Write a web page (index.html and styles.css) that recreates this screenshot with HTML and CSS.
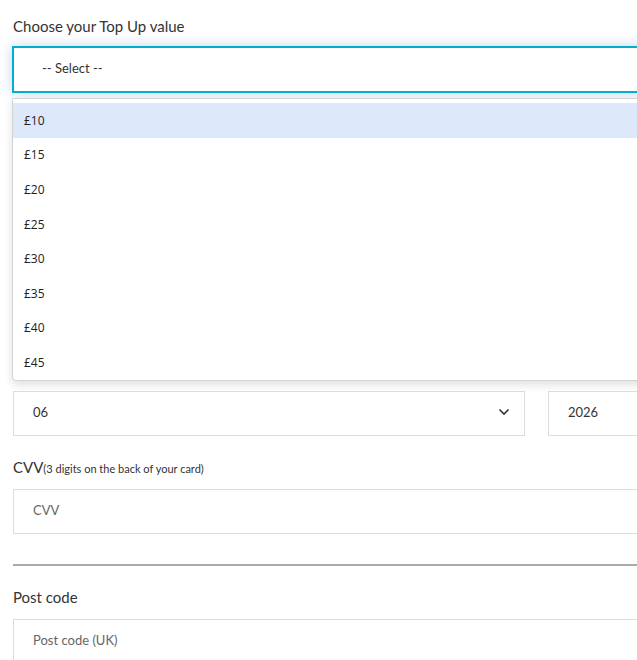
FILE: index.html
```html
<!DOCTYPE html>
<html lang="en-gb">
<head>
    <meta charset="UTF-8">
    <meta name="viewport" content="width=device-width, initial-scale=1.0">
    <title>Top Up</title>
    <link rel="stylesheet" href="styles.css">
</head>
<body>
    <form id="topup" class="topup">
        <div class="campo campo_valor">
            <label class="rotulo" for="valor">Choose your Top Up value</label>
            <div id="valor" class="select_aberto">-- Select --</div>
            <!-- lista aberta do select -->
            <ul class="lista">
                <li class="item ativo">£10</li>
                <li class="item">£15</li>
                <li class="item">£20</li>
                <li class="item">£25</li>
                <li class="item">£30</li>
                <li class="item">£35</li>
                <li class="item">£40</li>
                <li class="item">£45</li>
            </ul>
        </div>

        <div class="campo">
            <div class="linha_validade">
                <div class="caixa mes">
                    <span>06</span>
                    <svg class="seta" width="12" height="8" viewBox="0 0 12 8"><path d="M1.5 1.5 L6 6 L10.5 1.5" fill="none" stroke="#333" stroke-width="1.6"/></svg>
                </div>
                <div class="caixa ano"><span>2026</span></div>
            </div>
        </div>

        <div class="campo">
            <label class="rotulo">CVV<small>(3 digits on the back of your card)</small></label>
            <input class="entrada" type="text" placeholder="CVV">
        </div>

        <hr class="divisor">

        <div class="campo">
            <label class="rotulo">Post code</label>
            <input class="entrada" type="text" placeholder="Post code (UK)">
        </div>
    </form>
</body>
</html>
```

FILE: styles.css
```css
*{
    padding: 0px;
    margin: 0px;
    box-sizing: border-box;
}
html, body{
    overflow: hidden;
    background-color: #fff;
}
body{
    font-family: Lato, "Noto Sans", sans-serif;
    color: #333;
}
.topup{
    width: 760px;
    padding: 15px 0px 0px 13px;
}
.campo{
    display: flex;
    flex-direction: column;
    margin-bottom: 20px;
}
.campo_valor{
    margin-bottom: 0px;
}
.rotulo{
    font-size: 15px;
    line-height: 22px;
    margin-bottom: 11px;
    color: #333;
}
.campo_valor .rotulo{
    margin-bottom: 9px;
}
.rotulo small{
    font-size: 11px;
    line-height: 1;
}
.select_aberto{
    height: 47px;
    margin-left: -1px;
    border: 2px solid #00b0ca;
    padding: 0px 0px 3px 28px;
    display: flex;
    align-items: center;
    font-size: 13px;
    box-shadow: 0px 0px 12px rgba(90,130,200,0.35);
    background-color: #fff;
}
.lista{
    margin: 5px 0px 10px -1px;
    list-style: none;
    background-color: #fff;
    border: 1px solid #d4d4d4;
    border-radius: 0px 0px 4px 4px;
    padding-top: 4px;
    box-shadow: 0px 4px 10px rgba(0,0,0,0.12);
}
.item{
    height: 34.6px;
    display: flex;
    align-items: center;
    padding-left: 11px;
    font-family: "Open Sans", "Noto Sans", sans-serif;
    font-size: 12px;
    color: #222;
}
.ativo{
    background-color: #dde8fb;
}
.entrada{
    height: 45px;
    border: 1px solid #ddd;
    padding: 0px 0px 2px 19px;
    font-family: Lato, "Noto Sans", sans-serif;
    font-size: 13px;
    color: #333;
    outline: none;
}
.entrada::placeholder{
    color: #666;
}
.linha_validade{
    display: flex;
    gap: 23px;
}
.caixa{
    height: 45px;
    border: 1px solid #ddd;
    display: flex;
    align-items: center;
    justify-content: space-between;
    padding: 0px 14px 3px 19px;
    font-size: 13px;
}
.mes{
    width: 512px;
}
.ano{
    flex: 1;
}
.divisor{
    border: none;
    border-top: 2px solid #aaa;
    margin: 30px 0px 20px 0px;
}
```
